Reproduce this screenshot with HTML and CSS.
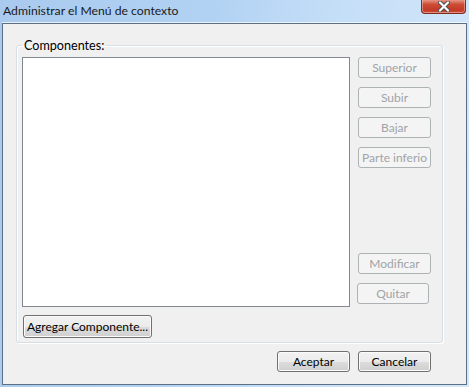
FILE: index.html
```html
<!DOCTYPE html>
<html lang="es">
<head>
    <meta charset="UTF-8">
    <title>Administrar el Menú de contexto</title>
    <link rel="stylesheet" href="styles.css">
</head>
<body>

    <div class="window">
        <div class="titlebar">
            <span class="title">Administrar el Menú de contexto</span>
            <button class="close-btn" aria-label="Cerrar">
                <svg width="12" height="11" viewBox="0 0 12 11">
                    <path d="M2 1.5 L10 9.5 M10 1.5 L2 9.5" stroke="#4b4f57" stroke-width="4" stroke-linecap="round" fill="none"/>
                    <path d="M2 1.5 L10 9.5 M10 1.5 L2 9.5" stroke="#ffffff" stroke-width="2.2" stroke-linecap="round" fill="none"/>
                </svg>
            </button>
        </div>

        <div class="client">
            <fieldset class="group">
                <legend>Componentes:</legend>
                <div class="group-row">
                    <div class="listbox"></div>
                    <div class="side">
                        <button class="btn" disabled>Superior</button>
                        <button class="btn" disabled>Subir</button>
                        <button class="btn" disabled>Bajar</button>
                        <button class="btn" disabled>Parte inferio</button>
                        <button class="btn btn-push" disabled>Modificar</button>
                        <button class="btn btn-quit" disabled>Quitar</button>
                    </div>
                </div>
                <button class="btn btn-add">Agregar Componente...</button>
            </fieldset>

            <div class="footer">
                <button class="btn">Aceptar</button>
                <button class="btn">Cancelar</button>
            </div>
        </div>
    </div>

</body>
</html>
```

FILE: styles.css
```css
body {
    margin: 0;
    font-family: Lato, "Open Sans", sans-serif;
    font-size: 11px;
    color: #000;
}
.window {
    width: 469px;
    height: 387px;
    box-sizing: border-box;
    padding: 0 2px 2px 2px;
    display: flex;
    flex-direction: column;
    background: linear-gradient(100deg, #a9caee 0%, #b2d2f3 40%, #c6dff8 65%, #d5e8fa 100%);
}
.titlebar {
    height: 23px;
    display: flex;
    justify-content: space-between;
    align-items: flex-start;
}
.title {
    padding: 3px 0 0 1px;
    line-height: 15px;
    font-size: 12.2px;
    color: #1a1a1a;
}
.close-btn {
    width: 45px;
    height: 20px;
    margin: -6px 1px 0 0;
    padding: 5px 0 0 0;
    display: flex;
    justify-content: center;
    align-items: center;
    border: 1px solid #7d2c21;
    border-top: none;
    border-radius: 0 0 4px 4px;
    background: linear-gradient(#eba999 0%, #e28c79 35%, #cd4a33 55%, #c23a25 85%, #d0563f 100%);
    box-shadow: inset 0 0 0 1px rgba(255, 255, 255, 0.35);
}
.client {
    flex: 1;
    display: flex;
    flex-direction: column;
    border: 1px solid #5c6f84;
    background-color: #f0f0f0;
    box-shadow: 0 -1px 0 rgba(255, 255, 255, 0.7);
}
.group {
    margin: 14px 23px 0 13px;
    padding: 4px 11px 4px 5px;
    min-width: 0;
    border: 1px solid #d5dfe5;
    border-radius: 3px;
    box-shadow: inset 1px 1px 0 #fff, 1px 1px 0 #fff;
}
.group legend {
    padding: 0 2px;
    line-height: 15px;
    font-size: 12.6px;
}
.group-row {
    display: flex;
    gap: 8px;
}
.listbox {
    flex: 1;
    height: 250px;
    box-sizing: border-box;
    border: 1px solid #828790;
    background-color: #fff;
}
.side {
    width: 73px;
    display: flex;
    flex-direction: column;
    gap: 9px;
    padding-bottom: 3px;
}
.btn {
    width: 73px;
    height: 21px;
    box-sizing: border-box;
    padding: 0;
    font: inherit;
    font-size: 12px;
    color: #000;
    border: 1px solid #707070;
    border-radius: 3px;
    background: linear-gradient(#f2f2f2 0%, #ebebeb 50%, #dddddd 51%, #cfcfcf 100%);
    box-shadow: inset 0 0 0 1px #fbfbfb;
}
.btn:disabled {
    color: #a0a3a8;
    border-color: #adb2b5;
    background: #f4f4f4;
    box-shadow: none;
}
.btn-push {
    margin-top: auto;
}
.btn-quit {
    width: 72px;
    margin-left: -1px;
}
.btn-add {
    width: 129px;
    height: 23px;
    margin: 8px 0 0 1px;
}
.footer {
    display: flex;
    justify-content: flex-end;
    gap: 8px;
    margin: 8px 35px 0 0;
}
```
